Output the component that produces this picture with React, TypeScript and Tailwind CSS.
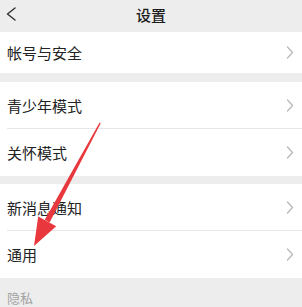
const font = { fontFamily: '"Noto Sans CJK SC", "Noto Sans", sans-serif' };

const Chevron = () => (
  <svg width="8" height="13" viewBox="0 0 8 13" fill="none">
    <polyline points="1.5,1 6.5,6.5 1.5,12" stroke="#b8b8b8" strokeWidth="1.3" strokeLinecap="round" strokeLinejoin="round" />
  </svg>
);

const Row = ({ label, divider, tall = true }: { label: string; divider?: boolean; tall?: boolean }) => (
  <div className="bg-white pl-[7px]">
    <div
      className={`flex items-center justify-between pr-[8px] ${tall ? "h-[47px]" : "h-[41px]"} ${
        divider ? "border-b border-[#e6e6e6]" : ""
      }`}
    >
      <span className="text-[15px] leading-none text-[#222]">{label}</span>
      <Chevron />
    </div>
  </div>
);

export default function App() {
  return (
    <div className="relative w-[302px] h-[307px] overflow-hidden bg-[#ededed]" style={font}>
      {/* Header */}
      <div className="relative flex items-center justify-center h-[32px] pb-[3px]">
        <svg className="absolute left-[5px] top-[6px]" width="12" height="16" viewBox="0 0 12 16" fill="none">
          <polyline points="10,2 2.5,8 10,14" stroke="#333" strokeWidth="1.5" strokeLinecap="round" strokeLinejoin="round" />
        </svg>
        <span className="text-[15px] font-medium leading-none text-[#1c1c1c]">设置</span>
      </div>

      <Row label="帐号与安全" tall={false} />
      <div className="h-[9px]" />
      <Row label="青少年模式" divider />
      <Row label="关怀模式" />
      <div className="h-[8px]" />
      <Row label="新消息通知" divider />
      <Row label="通用" />

      <div className="pl-[7px] pt-[13px] text-[13px] leading-none text-[#a3a3a3]">隐私</div>

      {/* Red annotation arrow */}
      <svg className="absolute left-0 top-0" width="302" height="307" viewBox="0 0 302 307">
        <polygon points="99.6,122.6 100.6,123.4 49.6,222.4 44.8,219.8" fill="#e8383d" />
        <polygon points="34,246 38.2,216.4 56.2,226.2" fill="#e8383d" />
      </svg>
    </div>
  );
}
